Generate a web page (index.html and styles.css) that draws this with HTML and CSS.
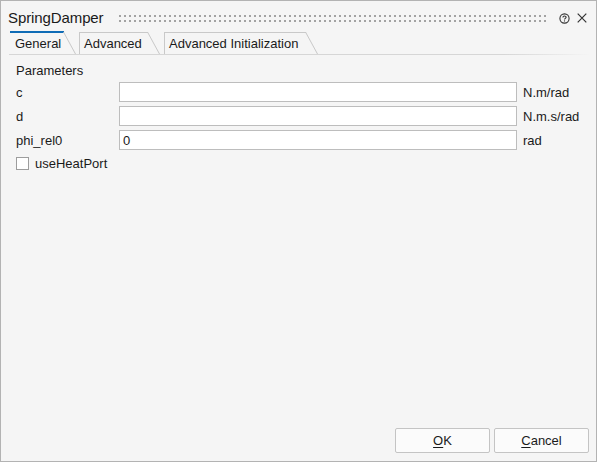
FILE: index.html
```html
<!DOCTYPE html>
<html>
<head>
<meta charset="utf-8">
<link rel="stylesheet" href="styles.css">
</head>
<body>
<div class="window">
  <div class="titlebar">
    <span class="title">SpringDamper</span>
    <svg class="grip" height="7"><defs><pattern id="dots" width="5" height="5" patternUnits="userSpaceOnUse"><rect width="2" height="2" fill="#a3a3a3"/></pattern></defs><rect width="100%" height="7" fill="url(#dots)"/></svg>
    <svg class="help" width="11" height="11" viewBox="0 0 11 11"><circle cx="5.5" cy="5.5" r="4.6" fill="none" stroke="#333" stroke-width="1.1"/><path d="M3.9 4.4 C3.9 2.6 7.1 2.6 7.1 4.3 C7.1 5.4 5.5 5.4 5.5 6.6" fill="none" stroke="#333" stroke-width="1.1"/><rect x="4.95" y="7.4" width="1.1" height="1.1" fill="#333"/></svg>
    <svg class="close" width="10" height="10" viewBox="0 0 10 10"><path d="M0.7 0.7 L9.3 9.3 M9.3 0.7 L0.7 9.3" stroke="#333" stroke-width="1.2"/></svg>
  </div>
  <div class="tabs">
    <div class="tab active"><span class="tab-label w-general">General</span><svg class="slant" width="13" height="23"><line x1="0.5" y1="1" x2="12.5" y2="23" stroke="#c9c9c9"/></svg></div>
    <div class="tab"><span class="tab-label w-adv">Advanced</span><svg class="slant" width="13" height="22"><line x1="0.5" y1="0" x2="12.5" y2="22" stroke="#c9c9c9"/></svg></div>
    <div class="tab"><span class="tab-label w-init">Advanced Initialization</span><svg class="slant" width="13" height="22"><line x1="0.5" y1="0" x2="12.5" y2="22" stroke="#c9c9c9"/></svg></div>
  </div>
  <div class="content">
    <div class="group-title">Parameters</div>
    <div class="params">
      <span class="label">c</span><input class="field" type="text" value=""><span class="unit">N.m/rad</span>
      <span class="label">d</span><input class="field" type="text" value=""><span class="unit">N.m.s/rad</span>
      <span class="label">phi_rel0</span><input class="field" type="text" value="0"><span class="unit">rad</span>
    </div>
    <label class="check"><span class="box"></span><span>useHeatPort</span></label>
  </div>
  <div class="footer">
    <button class="btn"><u>O</u>K</button>
    <button class="btn"><u>C</u>ancel</button>
  </div>
</div>
</body>
</html>
```
FILE: styles.css
```css
html, body {
  margin: 0;
  padding: 0;
  background: #f5f5f5;
}
.window {
  width: 597px;
  height: 462px;
  box-sizing: border-box;
  border: 1px solid #b3b3b3;
  background: #f5f5f5;
  display: flex;
  flex-direction: column;
  font-family: "Liberation Sans", Arial, sans-serif;
  font-size: 13px;
  color: #1a1a1a;
}
.titlebar {
  height: 30px;
  display: flex;
  align-items: flex-start;
  padding-left: 7px;
  padding-right: 9px;
  flex-shrink: 0;
}
.title {
  font-size: 15px;
  line-height: 18px;
  margin-top: 8px;
  letter-spacing: -0.1px;
  color: #1a1a1a;
}
.grip {
  flex: 1;
  margin-top: 14px;
  margin-left: 15px;
  margin-right: 12px;
  height: 7px;
}
.help {
  margin-top: 12px;
  margin-right: 7px;
}
.close {
  margin-top: 12px;
}
.tabs {
  display: flex;
  align-items: flex-end;
  height: 23px;
  margin: 0 6px 0 8px;
  padding-left: 1px;
  border-bottom: 1px solid transparent;
  border-image: linear-gradient(to right, #d6d6d6 0%, #d6d6d6 85%, rgba(214,214,214,0) 100%) 1;
  flex-shrink: 0;
}
.tab {
  display: flex;
  align-items: flex-end;
  margin-right: 4px;
}
.tab-label {
  box-sizing: border-box;
  height: 22px;
  line-height: 15px;
  padding: 3px 0 0 4px;
  border-top: 1px solid #c9c9c9;
  border-left: 1px solid #c9c9c9;
  white-space: nowrap;
}
.tab.active .tab-label {
  height: 23px;
  border-top: 2px solid #0f6cb6;
  border-left: none;
  padding-left: 5px;
}
.tab.active {
  margin-right: 3px;
}
.w-general { width: 54px; }
.w-adv { width: 69px; }
.w-init { width: 142px; }
.slant {
  display: block;
  margin-left: -1px;
}
.content {
  flex: 1;
  padding: 8px 8px 0 15px;
}
.group-title {
  line-height: 16px;
  margin-bottom: 3px;
}
.params {
  display: grid;
  grid-template-columns: 103px 398px auto;
  grid-auto-rows: 20px;
  row-gap: 4px;
  align-items: center;
}
.unit {
  padding-left: 6px;
}
.field {
  box-sizing: border-box;
  height: 20px;
  width: 398px;
  margin: 0;
  border: 1px solid #bdbdbd;
  background: #ffffff;
  padding: 0 3px;
  font-family: "Liberation Sans", Arial, sans-serif;
  font-size: 13px;
  color: #1a1a1a;
  outline: none;
}
.check {
  display: flex;
  align-items: center;
  height: 20px;
  margin-top: 3px;
}
.box {
  box-sizing: border-box;
  width: 13px;
  height: 13px;
  border: 1px solid #9d9d9d;
  background: #ffffff;
  margin-right: 6px;
}
.footer {
  display: flex;
  justify-content: flex-end;
  gap: 4px;
  padding: 0 7px 8px 0;
  flex-shrink: 0;
}
.btn {
  box-sizing: border-box;
  width: 95px;
  height: 25px;
  margin: 0;
  border: 1px solid #c4c4c4;
  border-radius: 2px;
  background: #fbfbfb;
  font-family: "Liberation Sans", Arial, sans-serif;
  font-size: 13px;
  color: #1a1a1a;
  padding: 0;
}
.btn u {
  text-decoration-thickness: 1px;
  text-underline-offset: 2px;
}
```
